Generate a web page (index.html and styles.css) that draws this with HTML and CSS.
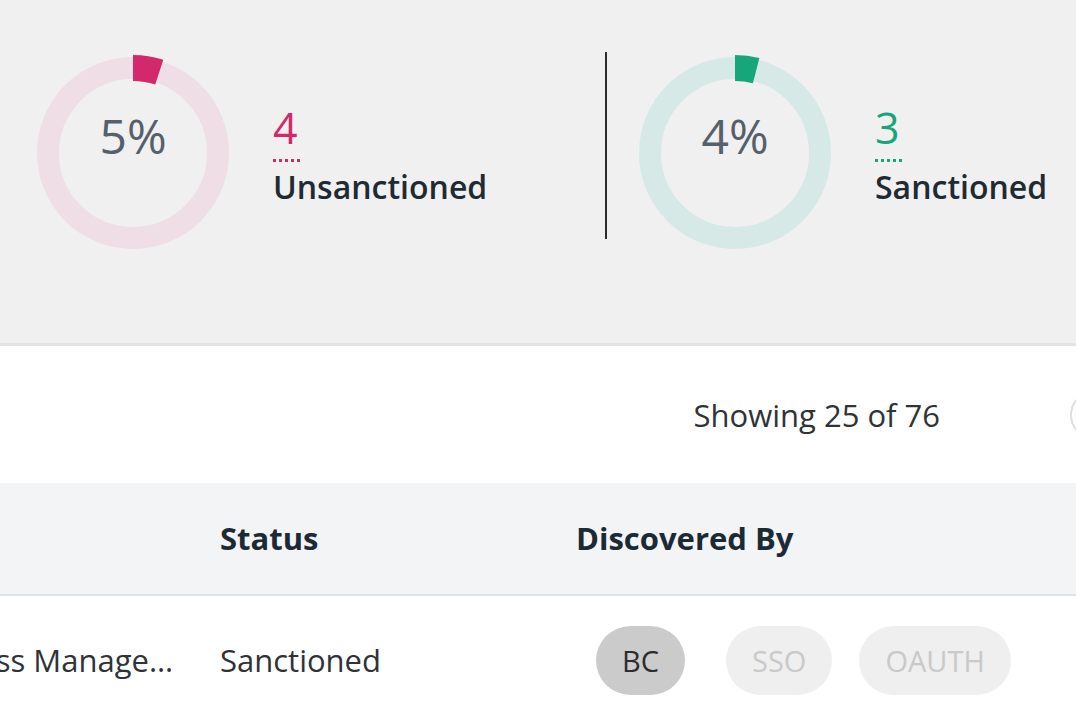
FILE: index.html
```html
<!DOCTYPE html>
<html lang="en">
  <head>
    <meta charset="UTF-8" />
    <meta name="viewport" content="width=device-width, initial-scale=1.0" />
    <title>Applications</title>
    <link rel="stylesheet" href="styles.css">
  </head>
  <body>
    <main class="page">
      <section class="summary">
        <div class="stat stat--unsanctioned">
          <div class="donut">
            <svg class="donut__chart" viewBox="0 0 196 196" width="196" height="196">
              <circle class="donut__track" cx="98" cy="98" r="85" />
              <path class="donut__value" d="M98 13 A85 85 0 0 1 124.27 17.16" />
            </svg>
            <span class="donut__label">5%</span>
          </div>
          <div class="stat__text">
            <span class="stat__count">4</span>
            <span class="stat__name">Unsanctioned</span>
          </div>
        </div>

        <div class="summary__divider"></div>

        <div class="stat stat--sanctioned">
          <div class="donut">
            <svg class="donut__chart" viewBox="0 0 196 196" width="196" height="196">
              <circle class="donut__track" cx="98" cy="98" r="85" />
              <path class="donut__value" d="M98 13 A85 85 0 0 1 119.14 15.67" />
            </svg>
            <span class="donut__label">4%</span>
          </div>
          <div class="stat__text">
            <span class="stat__count">3</span>
            <span class="stat__name">Sanctioned</span>
          </div>
        </div>
      </section>

      <div class="toolbar">
        <span class="toolbar__count">Showing 25 of 76</span>
        <button class="toolbar__btn"></button>
      </div>

      <div class="table">
        <div class="table__row table__head">
          <div class="table__cell table__cell--name"></div>
          <div class="table__cell">Status</div>
          <div class="table__cell">Discovered By</div>
        </div>
        <div class="table__row">
          <div class="table__cell table__cell--name">Access Management Suite</div>
          <div class="table__cell">Sanctioned</div>
          <div class="table__cell">
            <div class="pills">
              <span class="pill pill--on">BC</span>
              <span class="pill">SSO</span>
              <span class="pill">OAUTH</span>
            </div>
          </div>
        </div>
      </div>
    </main>
  </body>
</html>
```

FILE: styles.css
```css
* {
  margin: 0;
  padding: 0;
  box-sizing: border-box;
}

html,
body {
  width: 1076px;
  height: 718px;
  overflow: hidden;
}

body {
  font-family: 'Open Sans', 'Noto Sans', sans-serif;
  color: #2b3640;
  background-color: #fff;
}

/* summary */
.summary {
  display: flex;
  align-items: flex-start;
  height: 346px;
  padding: 52px 0 0 35px;
  background-color: #f0f0f0;
  border-bottom: 3px solid #e4e4e4;
}

.stat {
  display: flex;
  align-items: flex-start;
  margin-top: 3px;
}

.stat--unsanctioned {
  width: 570px;
  --accent: #d3286c;
  --track: #efdee5;
}

.stat--sanctioned {
  margin-left: 30px;
  --accent: #17a67a;
  --track: #d6e9e6;
}

.summary__divider {
  width: 2px;
  height: 187px;
  background-color: #2c2c2c;
}

.donut {
  display: grid;
  place-items: center;
  width: 196px;
  height: 196px;
}

.donut__chart,
.donut__label {
  grid-area: 1 / 1;
}

.donut__track {
  fill: none;
  stroke: var(--track);
  stroke-width: 22;
}

.donut__value {
  fill: none;
  stroke: var(--accent);
  stroke-width: 26;
}

.donut__label {
  margin-bottom: 34px;
  font-size: 48px;
  line-height: 1.2;
  color: #55606b;
}

.stat__text {
  display: flex;
  flex-direction: column;
  align-items: flex-start;
  margin: 48px 0 0 42px;
}

.stat__count {
  font-size: 43px;
  line-height: 50px;
  padding: 0 2px 6px 0;
  color: var(--accent);
  border-bottom: 3px dotted var(--accent);
}

.stat__name {
  margin-top: 6px;
  font-size: 32px;
  font-weight: 600;
  line-height: 1.2;
  color: #1f2a33;
}

/* toolbar */
.toolbar {
  display: flex;
  align-items: center;
  justify-content: flex-end;
  height: 137px;
}

.toolbar__count {
  font-size: 31px;
  color: #2f3338;
}

.toolbar__btn {
  flex-shrink: 0;
  width: 48px;
  height: 48px;
  margin: 0 -42px 0 130px;
  border: 2px solid #dedede;
  border-radius: 50%;
  background-color: #fff;
}

/* table */
.table {
  margin-left: -71px;
}

.table__row {
  display: grid;
  grid-template-columns: 291px 356px 1fr;
  align-items: center;
  height: 128px;
  font-size: 31px;
  color: #2f3338;
}

.table__head {
  height: 113px;
  padding-bottom: 2px;
  background-color: #f3f4f6;
  border-bottom: 2px solid #dbe2e9;
  font-weight: 700;
  color: #1c2a35;
}

.table__cell {
  white-space: nowrap;
}

.table__cell--name {
  padding-right: 34px;
  overflow: hidden;
  text-overflow: ellipsis;
}

.pills {
  display: flex;
  align-items: center;
  gap: 27px;
  margin-left: 20px;
}

.pill {
  display: inline-block;
  height: 69px;
  padding: 0 26px;
  border-radius: 35px;
  font-size: 29px;
  line-height: 69px;
  color: #c9c9c9;
  background-color: #efefef;
}

.pill--on {
  margin-right: 14px;
  color: #2d2d2d;
  background-color: #cbcbcb;
}
```
